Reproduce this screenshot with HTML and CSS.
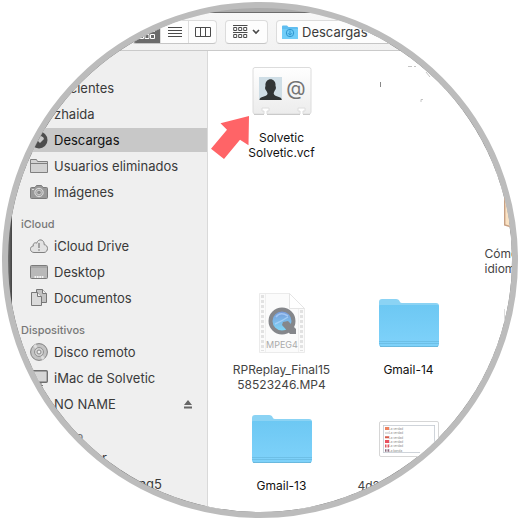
FILE: index.html
```html
<!DOCTYPE html>
<html lang="es">
<head>
<meta charset="utf-8">
<title>Descargas</title>
<link rel="stylesheet" href="styles.css">
</head>
<body>
<div class="lens">
  <div class="window">
    <header class="toolbar">
      <div class="segments">
        <button class="segment segment-active" aria-label="Iconos">
          <svg width="16" height="14" viewBox="0 0 16 14" fill="none" stroke="#fff"><path d="M.5 2.500h4v4h-4zM6 2.500h4v4H6zM11.500 2.500h4v4h-4zM.5 9.500h4v4h-4zM6 9.500h4v4H6zM11.500 9.500h4v4h-4z"/></svg>
        </button>
        <button class="segment" aria-label="Lista">
          <svg width="14" height="12" viewBox="0 0 14 12" stroke="#4a4a4a"><path d="M0 1.500h14M0 4.500h14M0 7.500h14M0 10.500h14"/></svg>
        </button>
        <button class="segment" aria-label="Columnas">
          <svg width="16" height="12" viewBox="0 0 16 12" fill="none" stroke="#4a4a4a"><path d="M.5 1.500h15v9H.5zM5.500 1.500v9M10.500 1.500v9"/></svg>
        </button>
      </div>
      <button class="tool arrange" aria-label="Agrupar">
        <svg width="15" height="14" viewBox="0 0 15 14" fill="none" stroke="#4a4a4a"><path d="M0 .5h14.500M0 7.500h14.500M.7 2.500h3v3h-3zM5.700 2.500h3v3h-3zM10.700 2.500h3v3h-3zM.7 9.500h3v3h-3zM5.700 9.500h3v3h-3zM10.700 9.500h3v3h-3z"/></svg>
        <svg width="8" height="6" viewBox="0 0 8 6" fill="none" stroke="#4a4a4a" stroke-width="1.600"><path d="M1 1l3 3 3-3"/></svg>
      </button>
      <button class="tool path">
        <svg width="16" height="14" viewBox="0 0 16 14"><path d="M0 1.500Q0 .5 1 .5h4l1.500 1.500H15q1 0 1 1V13q0 1-1 1H1q-1 0-1-1z" fill="#5fbdf0"/><path d="M0 4h16v9q0 1-1 1H1q-1 0-1-1z" fill="#70cdf8"/><circle cx="8" cy="8" r="3.700" fill="none" stroke="#2f97d0"/><path d="M8 5.500v4.500M6 8.200l2 2 2-2" fill="none" stroke="#2f97d0"/></svg>
        Descargas
      </button>
    </header>
    <div class="body">
      <nav class="sidebar">
        <ul>
          <li><a href="#" class="no-icon">Recientes</a></li>
          <li><a href="#" class="no-icon">zhaida</a></li>
          <li><a href="#" class="current">
            <svg width="18" height="18" viewBox="0 0 18 18"><circle cx="9" cy="9" r="8.500" fill="#4c4c4c"/><path d="M6 0h5v5q3 1 3 3l-4 4-5-5V5z" fill="#c8c8c8"/></svg>
            Descargas</a></li>
          <li><a href="#">
            <svg width="18" height="16" viewBox="0 0 18 16"><path d="M.5 14.500V1.500h6l1 2h10v11z" fill="#d2d2d2" stroke="#808080"/><path d="M.5 5.500h17" stroke="#808080"/></svg>
            Usuarios eliminados</a></li>
          <li><a href="#">
            <svg width="18" height="14" viewBox="0 0 18 14"><path d="M.5 3.500q0-1 1-1H5l1.500-2h5l1.500 2h3.500q1 0 1 1v9q0 1-1 1h-15q-1 0-1-1z" fill="#999" stroke="#7b7b7b"/><circle cx="9" cy="7.500" r="4.200" fill="#a4a4a4" stroke="#e0e0e0"/><circle cx="9" cy="7.500" r="2.300" fill="#8b8b8b" stroke="#ccc"/><path d="M2 4.500h2" stroke="#ddd"/></svg>
            Imágenes</a></li>
        </ul>
        <h2>iCloud</h2>
        <ul>
          <li><a href="#">
            <svg width="18" height="14" viewBox="0 0 18 14"><path d="M4 13.500C-.8 13.300-.4 7 3.300 7.100 2.600 4 5.500 3.200 6.700 4.200 8-.8 14.500 0 14.200 5.700c4.500.2 4.300 7.600-.2 7.800z" fill="#e2e2e2" stroke="#808080"/><path d="M9 4v5M9 10.300v1.400" stroke="#777" stroke-width="1.200"/></svg>
            iCloud Drive</a></li>
          <li><a href="#">
            <svg width="18" height="14" viewBox="0 0 18 14"><rect x=".5" y=".5" width="17" height="13" rx="1" fill="#b9b9b9" stroke="#7b7b7b"/><path d="M1 2h16" stroke="#969696"/><path d="M4.500 12h9" stroke="#f2f2f2" stroke-width="2" stroke-dasharray="1.700 .7"/></svg>
            Desktop</a></li>
          <li><a href="#">
            <svg width="18" height="18" viewBox="0 0 18 18" stroke="#777"><path d="M6.500.5h6l4 4v9h-10z" fill="#c2c2c2"/><path d="M12.500.5v4h4" fill="#eee"/><path d="M1.500 3.500h6l4 4v9h-10z" fill="#dadada"/><path d="M7.500 3.500v4h4" fill="#f2f2f2"/></svg>
            Documentos</a></li>
        </ul>
        <h2>Dispositivos</h2>
        <ul>
          <li><a href="#">
            <svg width="18" height="18" viewBox="0 0 18 18"><circle cx="9" cy="9" r="8.400" fill="#c3c3c3" stroke="#818181"/><path d="M9 9L3 3l3-2zM9 9l6 6-3 2z" fill="#dedede"/><circle cx="9" cy="9" r="4.500" fill="#d2d2d2" stroke="#929292"/><circle cx="9" cy="9" r="2" fill="#eee" stroke="#888"/></svg>
            Disco remoto</a></li>
          <li><a href="#">
            <svg width="18" height="16" viewBox="0 0 18 16"><rect x=".7" y=".7" width="16.600" height="11.600" rx="1" fill="#d5d5d5" stroke="#6f6f6f" stroke-width="1.400"/><path d="M7 13v2M11 13v2M5 15.500h8" stroke="#777"/></svg>
            iMac de Solvetic</a></li>
          <li><a href="#" class="no-icon">NO NAME
            <svg class="eject" width="8" height="9" viewBox="0 0 8 9" fill="#666"><path d="M4 0l4 5H0zM0 6.500h8v2H0z"/></svg></a></li>
        </ul>
        <h2>Compartido</h2>
        <ul class="shared">
          <li><a href="#">r</a></li>
          <li><a href="#">ng5</a></li>
        </ul>
      </nav>
      <main class="files">
        <figure class="file row-1">
          <div class="art">
            <svg width="60" height="50" viewBox="0 0 60 50">
              <defs><linearGradient id="card" x2="0" y2="1"><stop stop-color="#fff"/><stop offset="1" stop-color="#ececec"/></linearGradient></defs>
              <path d="M3 1.500h54q2 0 2 2V46q0 2-2 2h-6v-3h2v-3h-7v3h2v3H15v-3h2v-3h-7v3h2v3H3q-2 0-2-2V3.500q0-2 2-2z" fill="url(#card)" stroke="#dcdcdc"/>
              <path d="M2 48.500h10M15 48.500h33M51 48.500h7" stroke="#cacaca"/>
              <rect x="7" y="11" width="23" height="23" fill="#cfdee6"/>
              <path d="M7.500 34c0-4 7-3 8-6 .3-1-.7-2-1-3-2-2-1.500-4-1-5-1-9 11-9 10 0 .7 1 .8 3-1 5-.3 1-1 2-.7 3 1 3 8 2 8 6z" fill="#303536"/>
              <text x="44" y="29" class="at">@</text>
            </svg>
          </div>
          <figcaption>Solvetic<br>Solvetic.vcf</figcaption>
        </figure>
        <figure class="file row-2">
          <div class="art">
            <svg width="64" height="64" viewBox="0 0 64 64"><path d="M.7 15v35l24 7V15z" fill="#fae2c3" stroke="#c7a083" stroke-width="1.400"/></svg>
          </div>
          <figcaption class="start">Cómo<br>idiom</figcaption>
        </figure>
        <figure class="file movie row-3">
          <div class="art">
            <svg width="46" height="60" viewBox="0 0 46 60">
              <defs><linearGradient id="lens-blue" x2="0" y2="1"><stop stop-color="#7795d6"/><stop offset="1" stop-color="#80dcfa"/></linearGradient></defs>
              <path d="M.5.500h30l15 15v44H.5z" fill="#fbfbfb" stroke="#ebebeb"/>
              <path d="M30.500.500v15h15z" fill="#fff" stroke="#e5e5e5"/>
              <path d="M3.500 2v56M42.500 17v41" stroke="#e2e2e2" stroke-width="3" stroke-dasharray="3 2"/>
              <path d="M6.500 1v58M39.500 16v43" stroke="#efefef"/>
              <circle cx="23" cy="28" r="11.500" fill="url(#lens-blue)" stroke="#85878b" stroke-width="4"/>
              <path d="M24 29l5-1 8 8v5h-6l-8-9z" fill="#85878b"/>
              <path d="M17 24q4-6 12-1M16 31q7-3 13-7" fill="none" stroke="#bddcff" stroke-width="1.500" opacity=".6"/>
              <text x="23" y="55" class="kind">MPEG4</text>
            </svg>
          </div>
          <figcaption>RPReplay_Final15<br>58523246.MP4</figcaption>
        </figure>
        <figure class="file row-3">
          <div class="art">
            <svg width="60" height="48" viewBox="0 0 60 48">
              <defs><linearGradient id="folder" x2="0" y2="1"><stop stop-color="#6dc8f3"/><stop offset="1" stop-color="#7fd2fa"/></linearGradient></defs>
              <path d="M0 3q0-3 3-3h14q3 0 4 3 .5 1 2 1h34q3 0 3 3v10H0z" fill="#8bd3f4"/>
              <path d="M0 7q0-1 1-1h58q1 0 1 1v38q0 3-3 3H3q-3 0-3-3z" fill="url(#folder)"/>
              <path d="M0 42.500h60M0 44.500h60" stroke="#6dbfe6"/>
              <path d="M1 47q1 .8 2 .8h54q1 0 2-.8" fill="none" stroke="#62aed2"/>
            </svg>
          </div>
          <figcaption>Gmail-14</figcaption>
        </figure>
        <figure class="file row-3">
          <div class="art">
            <svg width="64" height="64" viewBox="0 0 64 64"><path d="M.5 18v22" stroke="#ddd"/></svg>
          </div>
        </figure>
        <figure class="file row-4">
          <div class="art">
            <svg width="60" height="48" viewBox="0 0 60 48">
              <path d="M0 3q0-3 3-3h14q3 0 4 3 .5 1 2 1h34q3 0 3 3v10H0z" fill="#8bd3f4"/>
              <path d="M0 7q0-1 1-1h58q1 0 1 1v38q0 3-3 3H3q-3 0-3-3z" fill="url(#folder)"/>
              <path d="M0 42.500h60M0 44.500h60" stroke="#6dbfe6"/>
              <path d="M1 47q1 .8 2 .8h54q1 0 2-.8" fill="none" stroke="#62aed2"/>
            </svg>
          </div>
          <figcaption>Gmail-13</figcaption>
        </figure>
        <figure class="file row-4">
          <div class="art">
            <svg width="60" height="36" viewBox="0 0 60 36">
              <rect x=".5" y=".5" width="59" height="35" rx="1.500" fill="#fff" stroke="#d6d6d6"/>
              <path d="M4.500 4v28M4 4.500h52M55.500 4v28M4 31.500h37" stroke="#c3c9d0" stroke-width=".8"/>
              <g class="tiny">
                <text x="10" y="9">La verdad</text><text x="10" y="13.300">La verdad</text><text x="10" y="17.600">La verdad</text><text x="10" y="22">La verdad</text><text x="10" y="26.300">La verdad</text><text x="10" y="30.500">La banda</text>
              </g>
              <path d="M6 7.500h4" stroke="#ee835f" stroke-width="3"/><path d="M6 12h4" stroke="#ddd" stroke-width="2"/><path d="M6 16.300h4" stroke="#d65b4b" stroke-width="2"/><path d="M6 20.500h4" stroke="#e9505e" stroke-width="3"/><path d="M6 25h4" stroke="#e25a60" stroke-width="3" stroke-dasharray="1.500 1"/><path d="M6 29.500h4" stroke="#8b6b7d" stroke-width="2.500" stroke-dasharray="1.500 1"/>
            </svg>
          </div>
          <figcaption class="start">4d2</figcaption>
        </figure>
        <svg class="arrow" width="38" height="44" viewBox="0 0 38 44"><path d="M38 0L9.500 7.300l6.500 6.500L0 32.700 13 43l16-19.300 8.500 5.600z" fill="#ff6467"/></svg>
        <svg class="specks" width="56" height="44" viewBox="0 0 56 44" fill="none" stroke="#b5b5b5"><path d="M.5 23v5" stroke="#888"/><path d="M28 7.500h4M34 7.500h2M46 13l4 5M41 43v-2.500h2" stroke-width=".8"/></svg>
      </main>
    </div>
  </div>
</div>
</body>
</html>
```
FILE: styles.css
```css
* {
  box-sizing: border-box;
}

body {
  margin: 0;
  padding: 2px;
  background: #fff;
  color: #3a3a3a;
  font: 13px/16px Inter, "Liberation Sans", sans-serif;
  overflow: hidden;
}

button {
  font: inherit;
  color: inherit;
}

svg {
  flex: none;
}

.lens {
  width: 100%;
  aspect-ratio: 1;
  border: 6px solid #bcbcbc;
  border-radius: 50%;
  overflow: hidden;
  background: linear-gradient(#aaa 0 20px, transparent 20px), linear-gradient(90deg, #777, #333 5px);
}

.window {
  display: flex;
  flex-direction: column;
  height: 100%;
  padding: 4px 0 0 4px;
}

.toolbar {
  display: flex;
  flex: none;
  align-items: center;
  gap: 8px;
  height: 39px;
  padding-left: 120px;
  border-top: 1px solid #6c6c6c;
  border-bottom: 1px solid #cacaca;
  background: linear-gradient(#f7f7f7, #f2f2f2);
}

.segments,
.tool {
  display: flex;
  align-items: center;
  height: 24px;
  border: 1px solid #dcdcdc;
  border-bottom-color: #c6c6c6;
  border-radius: 4px;
  background: #fdfdfd;
  overflow: hidden;
}

.segments {
  width: 85px;
}

.segment {
  display: flex;
  flex: 1;
  align-items: center;
  justify-content: center;
  height: 24px;
  padding: 0;
  border: 0;
  border-left: 1px solid #ddd;
  background: none;
}

.segment-active {
  border: 0;
  background: #6b6b6b;
}

.tool {
  gap: 4px;
  padding: 0 7px;
}

.path {
  flex: 1;
  padding: 0 5px;
}

.body {
  display: flex;
  flex: 1;
  min-height: 0;
}

.sidebar {
  flex: none;
  width: 196px;
  padding-top: 25px;
  border-right: 1px solid #d9d9d9;
  background: #efefef;
}

.sidebar ul {
  display: grid;
  gap: 2px;
  margin: 0;
  padding: 0;
  list-style: none;
}

.sidebar a {
  display: flex;
  align-items: center;
  gap: 6px;
  height: 24px;
  padding: 0 15px 0 18px;
  color: #3a3a3a;
  text-decoration: none;
}

.sidebar .no-icon {
  padding-left: 42px;
}

.sidebar .current {
  background: #c8c8c8;
  color: #111;
}

.sidebar .shared a {
  justify-content: flex-end;
  padding-right: 45px;
}

.sidebar .shared li:first-child a {
  padding-right: 100px;
}

.sidebar h2 {
  margin: 0;
  padding: 10px 0 0 9px;
  color: #777;
  font-size: 11px;
  font-weight: 500;
  line-height: 20px;
}

.eject {
  margin-left: auto;
}

.files {
  position: relative;
  display: grid;
  flex: 1;
  grid-template-columns: repeat(3, 127px);
  grid-template-rows: repeat(4, 101px);
  row-gap: 15px;
  min-width: 0;
  padding: 8px 0 0 10px;
  background: #fff;
  overflow: hidden;
}

.file {
  display: flex;
  flex-direction: column;
  align-items: center;
  gap: 7px;
  margin: 0;
}

.row-1 {
  grid-row: 1;
}

.row-2 {
  grid-area: 2 / 3;
}

.row-3 {
  grid-row: 3;
}

.row-4 {
  grid-row: 4;
}

.art {
  display: flex;
  align-items: center;
  justify-content: center;
  height: 64px;
}

figcaption {
  color: #111;
  font-size: 12px;
  line-height: 15px;
  text-align: center;
}

.movie figcaption,
figcaption.start {
  color: #444;
}

figcaption.start {
  width: 102px;
  text-align: left;
}

.at {
  fill: #747474;
  font-size: 20px;
  text-anchor: middle;
}

.kind {
  fill: #aaa;
  font-size: 9px;
  text-anchor: middle;
}

.tiny {
  fill: #888;
  font-size: 3px;
}

.arrow {
  position: absolute;
  top: 65px;
  left: 3px;
}

.specks {
  position: absolute;
  top: 8px;
  left: 172px;
}
```
